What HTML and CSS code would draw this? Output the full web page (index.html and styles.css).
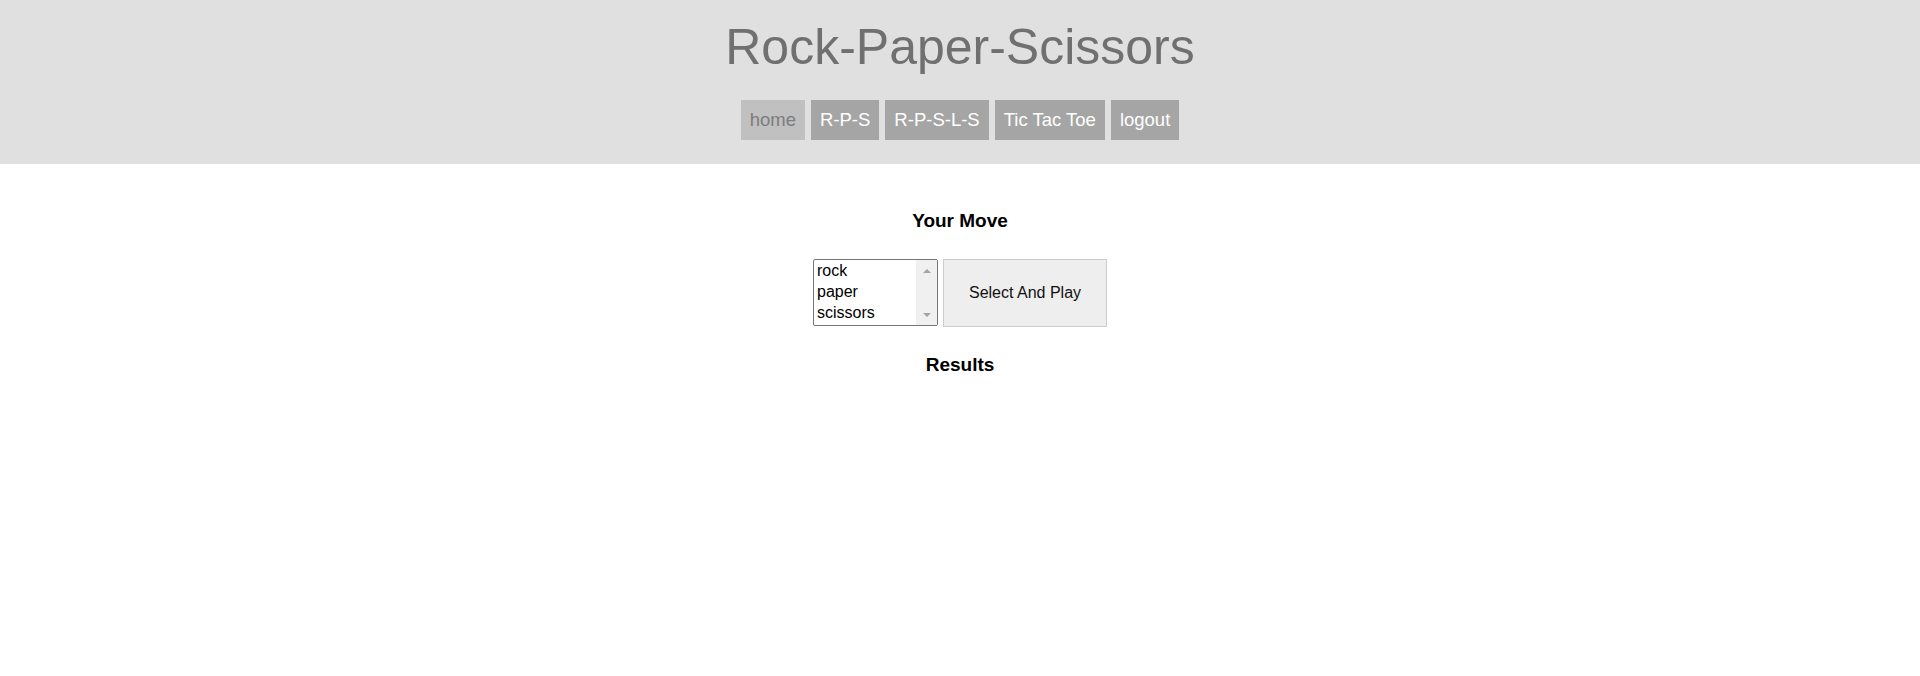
FILE: index.html
```html
<!DOCTYPE html>
<html lang="en">
<head>
<meta charset="utf-8">
<title>Rock-Paper-Scissors</title>
<link rel="stylesheet" href="styles.css">
</head>
<body>
<header class="site-header">
  <h1 class="site-title">Rock-Paper-Scissors</h1>
  <nav class="nav">
    <a class="nav-link nav-link-active" href="#">home</a>
    <a class="nav-link" href="#">R-P-S</a>
    <a class="nav-link" href="#">R-P-S-L-S</a>
    <a class="nav-link" href="#">Tic Tac Toe</a>
    <a class="nav-link" href="#">logout</a>
  </nav>
</header>
<main class="game">
  <h2 class="section-title">Your Move</h2>
  <form class="move-form">
    <div class="listbox">
      <select class="move-select" size="3" name="move">
        <option value="rock">rock</option>
        <option value="paper">paper</option>
        <option value="scissors">scissors</option>
      </select>
      <div class="listbox-scrollbar" aria-hidden="true">
        <span class="scroll-btn"><span class="arrow arrow-up"></span></span>
        <span class="scroll-btn"><span class="arrow arrow-down"></span></span>
      </div>
    </div>
    <button class="play-button" type="button">Select And Play</button>
  </form>
  <h2 class="section-title results-title">Results</h2>
</main>
</body>
</html>
```

FILE: styles.css
```css
html, body {
  margin: 0;
  padding: 0;
  background: #ffffff;
  font-family: "Liberation Sans", Arial, sans-serif;
}

.site-header {
  background: #e0e0e0;
  padding: 19px 0 24px;
  text-align: center;
}

.site-title {
  margin: 0;
  font-size: 50px;
  line-height: 56px;
  font-weight: normal;
  color: #707070;
}

.nav {
  margin-top: 25px;
  display: flex;
  justify-content: center;
  gap: 6px;
}

.nav-link {
  display: block;
  padding: 9px 9px;
  line-height: 22px;
  font-size: 18.5px;
  color: #ffffff;
  background: #a5a5a5;
  text-decoration: none;
}

.nav-link-active {
  background: #c0c0c0;
  color: #7d7d7d;
}

.game {
  padding-top: 46px;
  text-align: center;
}

.section-title {
  margin: 0;
  font-size: 19px;
  line-height: 22px;
  font-weight: bold;
  color: #000000;
}

.move-form {
  margin: 27px 0;
  display: flex;
  justify-content: center;
  align-items: flex-start;
  gap: 5px;
}

.listbox {
  display: flex;
  width: 125px;
  height: 67px;
  box-sizing: border-box;
  border: 1px solid #767676;
  border-radius: 2px;
  background: #ffffff;
  overflow: hidden;
}

.move-select {
  flex: 1;
  min-width: 0;
  height: 100%;
  margin: 0;
  padding: 2px 0 0;
  border: none;
  font-family: "Liberation Sans", Arial, sans-serif;
  font-size: 16px;
  color: #000000;
  background: #ffffff;
  overflow: hidden;
  outline: none;
}

.move-select option {
  padding: 0 2px 0 3px;
  line-height: 21px;
  min-height: 21px;
  color: #000000;
}

.listbox-scrollbar {
  width: 21px;
  background: #f0f0f0;
  display: flex;
  flex-direction: column;
  justify-content: space-between;
}

.scroll-btn {
  height: 21px;
  display: flex;
  align-items: center;
  justify-content: center;
}

.arrow {
  width: 0;
  height: 0;
  border-left: 4px solid transparent;
  border-right: 4px solid transparent;
}

.arrow-up {
  border-bottom: 4px solid #a3a3a3;
}

.arrow-down {
  border-top: 4px solid #a3a3a3;
}

.play-button {
  width: 164px;
  height: 68px;
  box-sizing: border-box;
  margin: 0;
  padding: 0;
  border: 1px solid #cccccc;
  background: #eeeeee;
  font-family: "Liberation Sans", Arial, sans-serif;
  font-size: 16px;
  color: #111111;
  cursor: pointer;
}
```
